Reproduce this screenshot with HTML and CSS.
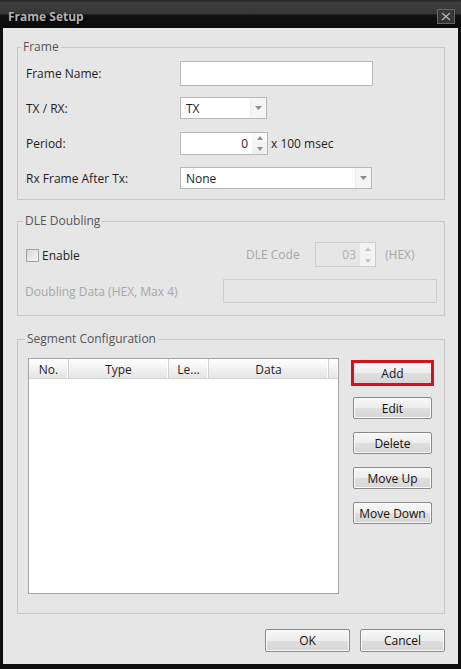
FILE: index.html
```html
<!DOCTYPE html>
<html lang="en">
  <head>
    <meta charset="UTF-8" />
    <meta name="viewport" content="width=device-width, initial-scale=1.0" />
    <title>Frame Setup</title>
    <link rel="stylesheet" href="styles.css">
  </head>
  <body>
    <div class="window">
      <div class="titlebar">
        <span class="title">Frame Setup</span>
        <span class="close">
          <svg width="10" height="9" viewBox="0 0 10 9"><path d="M1 1 L9 8 M9 1 L1 8" stroke="#b8b8b8" stroke-width="1.2" fill="none"/></svg>
        </span>
      </div>

      <div class="content">
        <fieldset class="group frame-group">
          <legend>Frame</legend>
          <div class="row">
            <label class="label">Frame Name:</label>
            <input class="text name-input" type="text" />
          </div>
          <div class="row">
            <label class="label">TX / RX:</label>
            <div class="combo combo-short">
              <span class="combo-value">TX</span>
              <span class="drop"><svg width="7" height="4" viewBox="0 0 7 4"><path d="M0 0 H7 L3.5 4 Z" fill="#8d8d8d"/></svg></span>
            </div>
          </div>
          <div class="row">
            <label class="label">Period:</label>
            <div class="spin period-spin">
              <span class="spin-value">0</span>
              <span class="spin-btns">
                <span class="spin-btn"><svg width="6" height="4" viewBox="0 0 6 4"><path d="M0 4 H6 L3 0 Z" fill="#8d8d8d"/></svg></span>
                <span class="spin-btn"><svg width="6" height="4" viewBox="0 0 6 4"><path d="M0 0 H6 L3 4 Z" fill="#8d8d8d"/></svg></span>
              </span>
            </div>
            <span class="unit">x 100 msec</span>
          </div>
          <div class="row">
            <label class="label">Rx Frame After Tx:</label>
            <div class="combo combo-long">
              <span class="combo-value">None</span>
              <span class="drop"><svg width="7" height="4" viewBox="0 0 7 4"><path d="M0 0 H7 L3.5 4 Z" fill="#8d8d8d"/></svg></span>
            </div>
          </div>
        </fieldset>

        <fieldset class="group dle-group">
          <legend>DLE Doubling</legend>
          <div class="row dle-row">
            <div class="check">
              <span class="checkbox"></span>
              <span>Enable</span>
            </div>
            <span class="disabled dle-label">DLE Code</span>
            <div class="spin dle-spin">
              <span class="spin-value">03</span>
              <span class="spin-btns">
                <span class="spin-btn"><svg width="6" height="4" viewBox="0 0 6 4"><path d="M0 4 H6 L3 0 Z" fill="#c4c4c4"/></svg></span>
                <span class="spin-btn"><svg width="6" height="4" viewBox="0 0 6 4"><path d="M0 0 H6 L3 4 Z" fill="#c4c4c4"/></svg></span>
              </span>
            </div>
            <span class="disabled hex">(HEX)</span>
          </div>
          <div class="row">
            <span class="disabled doubling-label">Doubling Data (HEX, Max 4)</span>
            <input class="text doubling-input" type="text" disabled />
          </div>
        </fieldset>

        <fieldset class="group segment-group">
          <legend>Segment Configuration</legend>
          <div class="segment-body">
            <div class="list">
              <div class="list-head">
                <span class="col col-no">No.</span>
                <span class="col col-type">Type</span>
                <span class="col col-len">Le...</span>
                <span class="col col-data">Data</span>
                <span class="col col-rest"></span>
              </div>
            </div>
            <div class="side-buttons">
              <button class="btn btn-add">Add</button>
              <button class="btn">Edit</button>
              <button class="btn">Delete</button>
              <button class="btn">Move Up</button>
              <button class="btn">Move Down</button>
            </div>
          </div>
        </fieldset>

        <div class="footer">
          <button class="btn btn-footer">OK</button>
          <button class="btn btn-footer">Cancel</button>
        </div>
      </div>
    </div>
  </body>
</html>
```

FILE: styles.css
```css
* {
  box-sizing: border-box;
}
body {
  margin: 0;
  font-family: "Open Sans", "Segoe UI", sans-serif;
  font-size: 12px;
  color: #1e1e1e;
  background: #fff;
}
.window {
  width: 461px;
  height: 669px;
  background: #0e0e0e;
  display: flex;
  flex-direction: column;
}
.titlebar {
  height: 28px;
  flex: none;
  display: flex;
  align-items: center;
  justify-content: space-between;
  padding: 0 6px 0 8px;
  background: linear-gradient(#262626 0, #3e3e3e 3px, #363636 14px, #121212 15px, #0a0a0a 28px);
}
.title {
  font-weight: bold;
  font-size: 12px;
  color: #b2b2b2;
  text-shadow: 1px 1px 1px #000;
  margin-top: 4px;
}
.close {
  width: 18px;
  height: 15px;
  margin-top: 5px;
  border: 1px solid #676767;
  background: #363636;
  display: flex;
  align-items: center;
  justify-content: center;
}
.content {
  flex: 1;
  margin: 0 3px 5px 3px;
  background: #e6e6e6;
  padding: 11px 13px 0 14px;
}

/* group boxes */
.group {
  margin: 0;
  padding: 6px 7px 9px 8px;
  border: 1px solid #c8c8c8;
  min-width: 0;
}
.group legend {
  margin-left: -5px;
  padding: 0 2px;
  color: #555;
  font-size: 12px;
  line-height: 16px;
}
.row {
  display: flex;
  align-items: center;
  height: 24px;
}
.frame-group .row + .row {
  margin-top: 11px;
}
.label {
  width: 154px;
  flex: none;
}
.text {
  height: 25px;
  border: 1px solid #b8b8b8;
  background: #fff;
  font: inherit;
  padding: 0 4px;
}
.name-input {
  width: 193px;
}

/* combo boxes */
.combo {
  height: 22px;
  border: 1px solid #b8b8b8;
  background: #fff;
  display: flex;
  align-items: center;
}
.combo-short {
  width: 87px;
}
.combo-long {
  width: 192px;
}
.combo-value {
  flex: 1;
  padding-left: 5px;
}
.drop {
  width: 16px;
  height: 100%;
  border-left: 1px solid #ececec;
  background: #f5f5f5;
  display: flex;
  align-items: center;
  justify-content: center;
}

/* spin boxes */
.spin {
  height: 23px;
  border: 1px solid #b8b8b8;
  background: #fff;
  display: flex;
}
.period-spin {
  width: 88px;
}
.spin-value {
  flex: 1;
  text-align: right;
  padding-right: 4px;
  line-height: 21px;
}
.spin-btns {
  width: 15px;
  display: flex;
  flex-direction: column;
  background: linear-gradient(#fdfdfd, #eeeeee);
}
.spin-btn {
  flex: 1;
  display: flex;
  align-items: center;
  justify-content: center;
}
.spin-btn + .spin-btn {
  border-top: 1px solid #f0f0f0;
}
.unit {
  margin-left: 3px;
}

/* DLE doubling */
.dle-group {
  margin-top: 13px;
  padding-top: 13px;
  padding-bottom: 12px;
}
.dle-group legend {
  margin-left: -3px;
}
.dle-row {
  height: 25px;
}
.dle-group .row + .row {
  margin-top: 12px;
}
.check {
  width: 220px;
  display: flex;
  align-items: center;
  gap: 3px;
  padding-top: 2px;
}
.checkbox {
  width: 13px;
  height: 13px;
  border: 1px solid #a3a3a3;
  background: linear-gradient(135deg, #d6d6d6, #f7f7f7);
}
.disabled {
  color: #a6a6a6;
}
.dle-label {
  width: 69px;
}
.dle-spin {
  width: 61px;
  height: 25px;
  border-color: #cdcdcd;
  background: #e6e6e6;
}
.dle-spin .spin-value {
  color: #b0b0b0;
  line-height: 23px;
}
.dle-spin .spin-btns {
  background: #f3f3f3;
}
.hex {
  margin-left: 9px;
}
.doubling-label {
  width: 198px;
  margin-left: -1px;
}
.doubling-input {
  width: 214px;
  height: 24px;
  border-color: #cdcdcd;
  background: #e6e6e6;
}

/* segment configuration */
.segment-group {
  margin-top: 15px;
  padding-top: 11px;
  padding-left: 10px;
  padding-bottom: 19px;
}
.segment-group legend {
  margin-left: -3px;
}
.segment-body {
  display: flex;
  align-items: flex-start;
}
.list {
  width: 311px;
  height: 236px;
  border: 1px solid #a2a4a6;
  background: #fff;
}
.list-head {
  display: flex;
  height: 20px;
  background: linear-gradient(#ffffff, #f2f2f2 50%, #e4e4e4);
  border-bottom: 1px solid #d2d2d2;
}
.col {
  text-align: center;
  line-height: 21px;
  border-right: 1px solid #d0d0d0;
  box-shadow: inset -1px 0 0 #fff;
}
.col-no {
  width: 40px;
}
.col-type {
  width: 100px;
}
.col-len {
  width: 40px;
}
.col-data {
  width: 120px;
}
.col-rest {
  flex: 1;
  border-right: none;
}
.side-buttons {
  margin-left: 14px;
  margin-top: 4px;
  display: flex;
  flex-direction: column;
  gap: 13px;
}

/* buttons */
.btn {
  width: 79px;
  height: 22px;
  padding: 0;
  font: inherit;
  color: #111;
  border: 1px solid #8a8a8a;
  border-radius: 2px;
  background: linear-gradient(#f7f7f7, #ededed 50%, #dfdfdf 51%, #d6d6d6);
  box-shadow: inset 0 0 0 1px #fbfbfb;
}
.btn-add {
  border-color: #d5121c;
  box-shadow: 0 0 0 2px #d5121c;
  border-radius: 0;
}
.footer {
  display: flex;
  justify-content: flex-end;
  gap: 10px;
  margin-top: 15px;
}
.btn-footer {
  width: 85px;
  height: 23px;
}
```
